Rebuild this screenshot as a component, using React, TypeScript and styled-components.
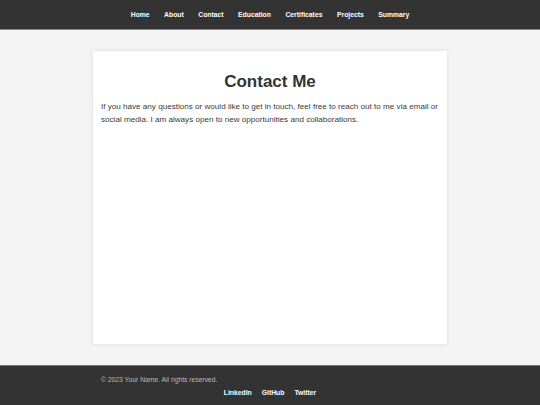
import React from 'react';
import styled, { createGlobalStyle } from 'styled-components';

const GlobalStyle = createGlobalStyle`
  html, body {
    margin: 0;
    padding: 0;
  }
  body {
    background-color: #f4f4f4;
    font-family: "Liberation Sans", Arial, sans-serif;
    color: #333;
  }
`;

const Page = styled.div`
  min-height: 405px;
  display: flex;
  flex-direction: column;
`;

const Header = styled.header`
  background-color: #333;
  height: 29px;
  border-bottom: 1px solid #8a8a8a;
  display: flex;
  align-items: center;
  justify-content: center;
`;

const Nav = styled.nav`
  display: flex;
  gap: 14.5px;
`;

const NavLink = styled.a`
  color: #fff;
  font-size: 6.8px;
  font-weight: bold;
  text-decoration: none;
`;

const Main = styled.main`
  flex: 1;
  padding: 21px 0;
`;

const Card = styled.section`
  width: 338px;
  height: 277px;
  margin: 0 auto;
  padding: 8px;
  background-color: #fff;
  box-shadow: 0 0 5px rgba(0, 0, 0, 0.1);
`;

const Title = styled.h2`
  margin: 13px 0 8px;
  font-size: 17px;
  line-height: 20px;
  text-align: center;
  color: #333;
`;

const Text = styled.p`
  margin: 0;
  font-size: 8.1px;
  line-height: 13px;
  color: #3a3a3a;
`;

const Footer = styled.footer`
  background-color: #333;
  border-top: 1px solid #777;
  height: 39px;
`;

const FooterInner = styled.div`
  width: 338px;
  margin: 0 auto;
  padding: 8px 8px 0;
`;

const Copyright = styled.p`
  margin: 0;
  font-size: 6.75px;
  line-height: 12px;
  color: #bbb;
`;

const Social = styled.div`
  display: flex;
  justify-content: center;
  gap: 10px;
  margin-top: 1px;
`;

const SocialLink = styled.a`
  color: #fff;
  font-size: 6.8px;
  line-height: 12px;
  font-weight: bold;
  text-decoration: none;
`;

const navItems = ['Home', 'About', 'Contact', 'Education', 'Certificates', 'Projects', 'Summary'];
const socials = ['LinkedIn', 'GitHub', 'Twitter'];

function App() {
  return (
    <Page>
      <GlobalStyle />
      <Header>
        <Nav>
          {navItems.map(item => <NavLink key={item} href="#">{item}</NavLink>)}
        </Nav>
      </Header>
      <Main>
        <Card>
          <Title>Contact Me</Title>
          <Text>
            If you have any questions or would like to get in touch, feel free to reach out to me via email or
            social media. I am always open to new opportunities and collaborations.
          </Text>
        </Card>
      </Main>
      <Footer>
        <FooterInner>
          <Copyright>© 2023 Your Name. All rights reserved.</Copyright>
          <Social>
            {socials.map(s => <SocialLink key={s} href="#">{s}</SocialLink>)}
          </Social>
        </FooterInner>
      </Footer>
    </Page>
  );
}

export default App;
